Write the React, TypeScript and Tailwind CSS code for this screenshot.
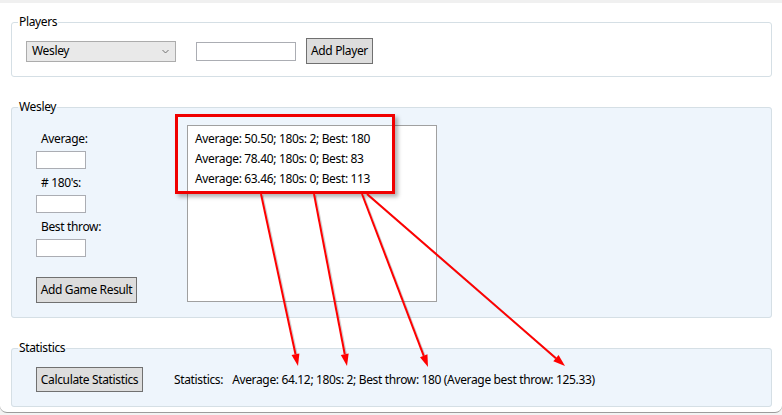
import React, { useState } from 'react';

const games = [
  { average: '50.50', count180: 2, best: 180 },
  { average: '78.40', count180: 0, best: 83 },
  { average: '63.46', count180: 0, best: 113 },
];

const TextBox: React.FC<{ className?: string }> = ({ className }) => (
  <input
    type="text"
    className={`h-[18px] border border-[#abadb3] bg-white outline-none ${className ?? ''}`}
  />
);

const Button: React.FC<{ label: string; className?: string }> = ({ label, className }) => (
  <button
    type="button"
    className={`whitespace-nowrap border border-[#707070] bg-[#dddddd] px-0 text-center text-[12px] text-black ${className ?? ''}`}
  >
    {label}
  </button>
);

const GroupBox: React.FC<{ title: string; className?: string; children: React.ReactNode }> = ({
  title,
  className,
  children,
}) => (
  <fieldset className={`rounded-[3px] border border-[#d5dfe5] ${className ?? ''}`}>
    <legend className="ml-[6px] px-[1px] leading-[16px]">{title}</legend>
    {children}
  </fieldset>
);

// red annotation arrows from the list to the statistics line
const arrows = [
  { x1: 261, y1: 194, x2: 298, y2: 366 },
  { x1: 314, y1: 194, x2: 347, y2: 366 },
  { x1: 362, y1: 194, x2: 428, y2: 367 },
  { x1: 367, y1: 194, x2: 565, y2: 366 },
];

const Arrow: React.FC<{ x1: number; y1: number; x2: number; y2: number }> = ({ x1, y1, x2, y2 }) => {
  const dx = x2 - x1;
  const dy = y2 - y1;
  const len = Math.sqrt(dx * dx + dy * dy);
  const ux = dx / len;
  const uy = dy / len;
  const bx = x2 - ux * 12;
  const by = y2 - uy * 12;
  const px = -uy * 4;
  const py = ux * 4;
  return (
    <g>
      <line x1={x1 + 1.5} y1={y1 + 1.5} x2={bx + 1.5} y2={by + 1.5} stroke="rgba(0,0,0,0.18)" strokeWidth={2} />
      <line x1={x1} y1={y1} x2={bx} y2={by} stroke="#ff0000" strokeWidth={2} />
      <polygon points={`${x2},${y2} ${bx + px},${by + py} ${bx - px},${by - py}`} fill="#ff0000" />
    </g>
  );
};

export default function App() {
  const [player] = useState('Wesley');

  return (
    <div className="relative h-[415px] w-[782px] overflow-hidden bg-[#f3f3f3] font-['Segoe_UI','Noto_Sans',sans-serif] text-[12px] tracking-[-0.35px] text-black">
      <div className="h-[413px] rounded-b-[7px] border-b border-[#9c9c9c] bg-white">
        <div className="h-[3px] bg-[#f0f0f0]" />
        <div className="flex flex-col pl-[11px] pr-[10px] pt-[11px]">
          <GroupBox title="Players" className="bg-white">
            <div className="flex items-center pb-[12px] pl-[14px] pt-[8px]">
              <div className="flex h-[21px] w-[150px] items-center justify-between border border-[#acacac] bg-[#e9e9e9] pl-[5px] pr-[6px]">
                <span>{player}</span>
                <svg width="7" height="5" viewBox="0 0 7 5">
                  <path d="M0.5 1 L3.5 4 L6.5 1" fill="none" stroke="#707070" strokeWidth="1" />
                </svg>
              </div>
              <TextBox className="ml-[20px] h-[19px] w-[100px]" />
              <Button label="Add Player" className="ml-[10px] h-[26px] w-[67px]" />
            </div>
          </GroupBox>

          <GroupBox title={player} className="mt-[22px] bg-[#eef5fc]">
            <div className="flex items-start pb-[14px] pl-[24px]">
              <div className="flex w-[151px] flex-col items-start pt-[16px]">
                <span className="ml-[5px] leading-[16px]">Average:</span>
                <TextBox className="mt-[4px] w-[50px]" />
                <span className="ml-[5px] mt-[6px] leading-[16px]"># 180's:</span>
                <TextBox className="mt-[4px] w-[50px]" />
                <span className="ml-[5px] mt-[6px] leading-[16px]">Best throw:</span>
                <TextBox className="mt-[4px] w-[50px]" />
                <Button label="Add Game Result" className="mt-[20px] h-[26px] w-[101px]" />
              </div>
              <div className="mt-[10px] flex h-[177px] w-[250px] flex-col border border-[#a0a0a0] bg-white pl-[7px] pt-[3px]">
                {games.map((g, i) => (
                  <div key={i} className="leading-[20px]">
                    Average: {g.average}; 180s: {g.count180}; Best: {g.best}
                  </div>
                ))}
              </div>
            </div>
          </GroupBox>

          <GroupBox title="Statistics" className="mt-[22px] bg-[#eef5fc]">
            <div className="flex items-center pb-[14px] pl-[24px] pt-[11px]">
              <Button label="Calculate Statistics" className="h-[25px] w-[107px]" />
              <span className="ml-[31px]">Statistics:</span>
              <span className="ml-[9px]">Average: 64.12; 180s: 2; Best throw: 180 (Average best throw: 125.33)</span>
            </div>
          </GroupBox>
        </div>
      </div>

      {/* annotation overlay */}
      <div className="pointer-events-none absolute left-[175px] top-[114px] h-[80px] w-[220px] border-[3px] border-[#f00000] shadow-[3px_3px_4px_rgba(0,0,0,0.3)]" />
      <svg className="pointer-events-none absolute left-0 top-0" width="782" height="415">
        {arrows.map((a, i) => (
          <Arrow key={i} {...a} />
        ))}
      </svg>
    </div>
  );
}
